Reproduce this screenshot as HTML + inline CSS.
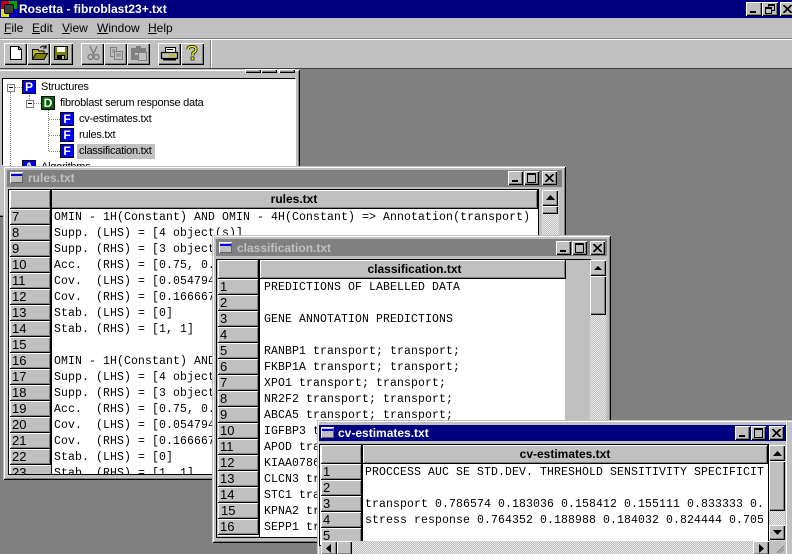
<!DOCTYPE html>
<html><head><meta charset="utf-8"><style>
html,body{margin:0;padding:0}
#r{position:relative;width:792px;height:554px;overflow:hidden;background:#808080;font-family:"Liberation Sans",sans-serif;font-size:12px;color:#000}
#r div,#r span,#r svg{position:absolute;white-space:pre}
.b{background:#c0c0c0;box-shadow:inset 1px 1px 0 #fff,inset -1px -1px 0 #000,inset -2px -2px 0 #808080}
.w{background:#c0c0c0;box-shadow:inset 1px 1px 0 #c0c0c0,inset -1px -1px 0 #000,inset 2px 2px 0 #fff,inset -2px -2px 0 #808080}
.t{font-weight:bold;font-size:12px;color:#c0c0c0;line-height:16px;height:16px}
.m{font-family:"Liberation Mono",monospace;font-size:11.5px;letter-spacing:.1px;line-height:16px;height:16px;overflow:hidden}
.n{font-size:13px;line-height:15px;height:15px;overflow:hidden}
.h{font-weight:bold;font-size:12px;line-height:18px;text-align:center}
.c{background:#c0c0c0;box-shadow:inset 1px 1px 0 #fff,inset -1px -1px 0 #808080;border-bottom:1px solid #000;border-right:1px solid #000;box-sizing:border-box}
.chk{background-color:#e8e8e8;background-image:linear-gradient(45deg,#c0c0c0 25%,transparent 25%,transparent 75%,#c0c0c0 75%),linear-gradient(45deg,#c0c0c0 25%,transparent 25%,transparent 75%,#c0c0c0 75%);background-size:2px 2px;background-position:0 0,1px 1px}
.ic{width:12px;height:12px;background:#00f;color:#fff;font-weight:bold;font-size:12px;line-height:12px;text-align:center;box-shadow:0 0 0 1px #000}
.tree{font-size:11px;letter-spacing:-.25px;line-height:15px}
.dv{border-left:1px dotted #808080}.dh{border-top:1px dotted #808080}
.wi{width:13px;height:11px;background:#c0c0c0;box-shadow:inset 1px 1px 0 #fff,inset -1px -1px 0 #606060}
.wi:after{content:"";position:absolute;left:1px;top:2px;width:11px;height:2px;background:#0000e0}
</style></head><body><div id="r">

<!-- main title -->
<div style="left:0;top:0;width:792px;height:18px;background:#000080"></div>
<div style="left:1px;top:1px;width:16px;height:16px;background:#c00000"></div>
<div style="left:1px;top:9px;width:8px;height:8px;background:#e0e000"></div>
<div style="left:9px;top:1px;width:8px;height:8px;background:#00a000"></div>
<div style="left:9px;top:9px;width:8px;height:8px;background:#0000d0"></div>
<div style="left:4px;top:4px;width:8px;height:8px;background:#404040;border:1px solid #000;border-radius:2px"></div>
<div style="left:19px;top:0;color:#fff;font-weight:bold;font-size:12px;line-height:18px">Rosetta - fibroblast23+.txt</div>
<div class="b" style="left:746px;top:2px;width:16px;height:14px"></div>
<div style="left:750px;top:11px;width:6px;height:2px;background:#000"></div>
<div class="b" style="left:762px;top:2px;width:16px;height:14px"></div>
<div style="left:768px;top:4px;width:5px;height:4px;border:1px solid #000;border-top-width:2px"></div>
<div style="left:765px;top:7px;width:5px;height:4px;border:1px solid #000;border-top-width:2px;background:#c0c0c0"></div>
<div class="b" style="left:780px;top:2px;width:16px;height:14px"></div>
<svg style="left:783px;top:5px" width="9" height="8"><path d="M0 0L8 8M1 0L9 8M8 0L0 8M9 0L1 8" stroke="#000"/></svg>

<!-- menu + toolbar -->
<div style="left:0;top:18px;width:792px;height:51px;background:#c0c0c0"></div>
<div style="left:4px;top:20px;font-size:12px;line-height:16px"><u>F</u>ile</div>
<div style="left:32px;top:20px;font-size:12px;line-height:16px"><u>E</u>dit</div>
<div style="left:62px;top:20px;font-size:12px;line-height:16px"><u>V</u>iew</div>
<div style="left:97px;top:20px;font-size:12px;line-height:16px"><u>W</u>indow</div>
<div style="left:148px;top:20px;font-size:12px;line-height:16px"><u>H</u>elp</div>
<div style="left:0;top:38px;width:792px;height:1px;background:#808080"></div>
<div style="left:0;top:39px;width:792px;height:1px;background:#fff"></div>
<div style="left:210px;top:40px;width:1px;height:28px;background:#808080"></div>
<div style="left:211px;top:40px;width:1px;height:28px;background:#fff"></div>
<div style="left:0;top:68px;width:792px;height:1px;background:#404040"></div>

<div class="b" style="left:4px;top:43px;width:23px;height:22px"></div>
<div class="b" style="left:27px;top:43px;width:23px;height:22px"></div>
<div class="b" style="left:50px;top:43px;width:23px;height:22px"></div>
<div class="b" style="left:81px;top:43px;width:23px;height:22px"></div>
<div class="b" style="left:104px;top:43px;width:23px;height:22px"></div>
<div class="b" style="left:127px;top:43px;width:23px;height:22px"></div>
<div class="b" style="left:158px;top:43px;width:23px;height:22px"></div>
<div class="b" style="left:181px;top:43px;width:23px;height:22px"></div>
<svg style="left:0;top:38px" width="210" height="30">
<path d="M10.500 8.500H18.500L21.500 11.500V21.500H10.500Z" fill="#fff" stroke="#000"/><path d="M18.500 8.500V11.500H21.500" fill="none" stroke="#000"/>
<path d="M32.500 11.500H38L39 13H44V21.500H32.500Z" fill="#c0c000" stroke="#000"/><path d="M32.500 21.500L36 15.500H47.500L44 21.500Z" fill="#808000" stroke="#000"/><path d="M40 9.500Q44 6.500 46 9.500M46 7V10H43" fill="none" stroke="#000"/>
<path d="M54.500 8.500H67.500V21.500H54.500Z" fill="#808000" stroke="#000"/><rect x="57" y="9" width="8" height="5" fill="#fff"/><rect x="57" y="17" width="8" height="4" fill="#000"/><rect x="62" y="18" width="2" height="3" fill="#c0c0c0"/>
<path d="M90 8L94 17M97 8L93 17" stroke="#808080" stroke-width="1.500"/><circle cx="90.500" cy="19" r="2.500" fill="none" stroke="#808080" stroke-width="1.500"/><circle cx="96.500" cy="19" r="2.500" fill="none" stroke="#808080" stroke-width="1.500"/>
<path d="M110.500 9.500H116.500V18.500H110.500Z" fill="#c0c0c0" stroke="#808080"/><path d="M114.500 13.500H122.500V21.500H114.500Z" fill="#c0c0c0" stroke="#808080"/><path d="M112 12H115M112 14H114M116 16H121M116 18H121" stroke="#808080"/>
<path d="M131.500 10.500H145.500V21.500H131.500Z" fill="#808080" stroke="#808080"/><rect x="136" y="8" width="5" height="3" fill="#808080"/><path d="M138.500 14.500H146.500V22.500H138.500Z" fill="#c0c0c0" stroke="#808080"/><path d="M135 16H138" stroke="#fff"/>
<path d="M165.500 9.500H175.500V14.500H165.500Z" fill="#fff" stroke="#000"/><path d="M161.500 14.500H177.500V20.500H161.500Z" fill="#c0c0c0" stroke="#000" stroke-width="1.300"/><path d="M163 21.500H176" stroke="#000" stroke-width="2"/><path d="M169 17.500H175" stroke="#c0c000" stroke-width="2"/><path d="M167 11.500H173" stroke="#000"/>
<path d="M188 11.500Q188 8.500 192 8.500Q196 8.500 196 11.500Q196 13.500 193 15V17.500" fill="none" stroke="#000" stroke-width="3"/><path d="M188 11.500Q188 8.500 192 8.500Q196 8.500 196 11.500Q196 13.500 193 15V17.500" fill="none" stroke="#ffff00" stroke-width="1.500"/><rect x="191" y="19" width="3" height="3" fill="#ffff00" stroke="#000" stroke-width=".7"/>
</svg>

<!-- tree window -->
<div class="w" style="left:-4px;top:69px;width:304px;height:148px"></div>
<div class="b" style="left:245px;top:69px;width:16px;height:4px"></div>
<div class="b" style="left:261px;top:69px;width:16px;height:4px"></div>
<div class="b" style="left:279px;top:69px;width:16px;height:4px"></div>
<div style="left:3px;top:79px;width:293px;height:87px;background:#fff;box-shadow:-1px -1px 0 #000"></div>
<div class="dv" style="left:10px;top:92px;height:74px"></div>
<div class="dv" style="left:29px;top:95px;height:4px"></div>
<div class="dv" style="left:48px;top:110px;height:41px"></div>
<div class="dh" style="left:14px;top:87px;width:8px"></div>
<div class="dh" style="left:33px;top:103px;width:8px"></div>
<div class="dh" style="left:49px;top:119px;width:11px"></div>
<div class="dh" style="left:49px;top:135px;width:11px"></div>
<div class="dh" style="left:49px;top:151px;width:11px"></div>
<div style="left:7px;top:84px;width:6px;height:6px;border:1px solid #808080;background:#fff"></div><div style="left:9px;top:87px;width:4px;height:1px;background:#000"></div>
<div style="left:26px;top:100px;width:6px;height:6px;border:1px solid #808080;background:#fff"></div><div style="left:28px;top:103px;width:4px;height:1px;background:#000"></div>
<div class="ic" style="left:23px;top:81px">P</div>
<div class="ic" style="left:42px;top:97px;background:#006400">D</div>
<div class="ic" style="left:61px;top:113px">F</div>
<div class="ic" style="left:61px;top:129px">F</div>
<div class="ic" style="left:61px;top:145px">F</div>
<div class="tree" style="left:41px;top:80px">Structures</div>
<div class="tree" style="left:60px;top:96px">fibroblast serum response data</div>
<div class="tree" style="left:79px;top:112px">cv-estimates.txt</div>
<div class="tree" style="left:79px;top:128px">rules.txt</div>
<div style="left:77px;top:144px;width:78px;height:15px;background:#c0c0c0"></div>
<div class="tree" style="left:79px;top:144px">classification.txt</div>
<div class="ic" style="left:23px;top:161px">A</div>
<div class="tree" style="left:41px;top:160px">Algorithms</div>

<!-- rules window -->
<div class="w" style="left:3px;top:166px;width:563px;height:314px;overflow:hidden">
 <div style="left:4px;top:4px;width:555px;height:17px;background:#808080"></div>
 <div style="left:6px;top:24px;width:529px;height:284px;background:#fff;box-shadow:0 0 0 1px #000"></div>
 <div style="left:7px;top:24px;width:41px;height:19px" class="c"></div>
 <div class="c h" style="left:48px;top:24px;width:487px;height:19px">rules.txt</div>
 <div style="left:48px;top:24px;width:1px;height:284px;background:#000"></div>
 <div class="c n" style="left:7px;top:43px;width:41px;height:16px;padding-left:2px">7</div>
 <div class="c n" style="left:7px;top:59px;width:41px;height:16px;padding-left:2px">8</div>
 <div class="c n" style="left:7px;top:75px;width:41px;height:16px;padding-left:2px">9</div>
 <div class="c n" style="left:7px;top:91px;width:41px;height:16px;padding-left:2px">10</div>
 <div class="c n" style="left:7px;top:107px;width:41px;height:16px;padding-left:2px">11</div>
 <div class="c n" style="left:7px;top:123px;width:41px;height:16px;padding-left:2px">12</div>
 <div class="c n" style="left:7px;top:139px;width:41px;height:16px;padding-left:2px">13</div>
 <div class="c n" style="left:7px;top:155px;width:41px;height:16px;padding-left:2px">14</div>
 <div class="c n" style="left:7px;top:171px;width:41px;height:16px;padding-left:2px">15</div>
 <div class="c n" style="left:7px;top:187px;width:41px;height:16px;padding-left:2px">16</div>
 <div class="c n" style="left:7px;top:203px;width:41px;height:16px;padding-left:2px">17</div>
 <div class="c n" style="left:7px;top:219px;width:41px;height:16px;padding-left:2px">18</div>
 <div class="c n" style="left:7px;top:235px;width:41px;height:16px;padding-left:2px">19</div>
 <div class="c n" style="left:7px;top:251px;width:41px;height:16px;padding-left:2px">20</div>
 <div class="c n" style="left:7px;top:267px;width:41px;height:16px;padding-left:2px">21</div>
 <div class="c n" style="left:7px;top:283px;width:41px;height:16px;padding-left:2px">22</div>
 <div class="n" style="left:7px;top:299px;width:41px;height:9px;padding-left:2px;box-sizing:border-box;background:#c0c0c0;box-shadow:inset 1px 1px 0 #fff">23</div>
 <div class="m" style="left:51px;top:44px">OMIN - 1H(Constant) AND OMIN - 4H(Constant) =&gt; Annotation(transport)</div>
 <div class="m" style="left:51px;top:60px">Supp. (LHS) = [4 object(s)]</div>
 <div class="m" style="left:51px;top:76px">Supp. (RHS) = [3 object(s)]</div>
 <div class="m" style="left:51px;top:92px">Acc.  (RHS) = [0.75, 0.25]</div>
 <div class="m" style="left:51px;top:108px">Cov.  (LHS) = [0.054794]</div>
 <div class="m" style="left:51px;top:124px">Cov.  (RHS) = [0.166667]</div>
 <div class="m" style="left:51px;top:140px">Stab. (LHS) = [0]</div>
 <div class="m" style="left:51px;top:156px">Stab. (RHS) = [1, 1]</div>
 <div class="m" style="left:51px;top:188px">OMIN - 1H(Constant) AND OMIN</div>
 <div class="m" style="left:51px;top:204px">Supp. (LHS) = [4 object(s)]</div>
 <div class="m" style="left:51px;top:220px">Supp. (RHS) = [3 object(s)]</div>
 <div class="m" style="left:51px;top:236px">Acc.  (RHS) = [0.75, 0.25]</div>
 <div class="m" style="left:51px;top:252px">Cov.  (LHS) = [0.054794]</div>
 <div class="m" style="left:51px;top:268px">Cov.  (RHS) = [0.166667]</div>
 <div class="m" style="left:51px;top:284px">Stab. (LHS) = [0]</div>
 <div class="m" style="left:51px;top:300px;height:8px">Stab. (RHS) = [1, 1]</div>
</div>
<div class="b" style="left:508px;top:171px;width:15px;height:14px"></div><div style="left:512px;top:180px;width:6px;height:2px;background:#000"></div>
<div class="b" style="left:524px;top:171px;width:15px;height:14px"></div><div style="left:527px;top:173px;width:7px;height:7px;border:1px solid #000;border-top-width:2px"></div>
<div class="b" style="left:542px;top:171px;width:15px;height:14px"></div>
<svg style="left:545px;top:174px" width="9" height="8"><path d="M0 0L8 8M1 0L9 8M8 0L0 8M9 0L1 8" stroke="#000"/></svg>
<div class="chk" style="left:542px;top:190px;width:17px;height:60px"></div>
<div class="b" style="left:542px;top:190px;width:16px;height:16px"></div>
<svg style="left:546px;top:195px" width="9" height="5"><path d="M4.500 0L9 5H0Z"/></svg>
<div class="b" style="left:542px;top:206px;width:16px;height:8px"></div>

<!-- classification window -->
<div class="w" style="left:212px;top:235px;width:399px;height:308px;overflow:hidden">
 <div style="left:4px;top:4px;width:391px;height:17px;background:#808080"></div>
 <div style="left:5px;top:25px;width:373px;height:277px;background:#c0c0c0;box-shadow:0 0 0 1px #000"></div>
 <div style="left:48px;top:44px;width:305px;height:258px;background:#fff"></div>
 <div class="c" style="left:6px;top:25px;width:41px;height:19px"></div>
 <div class="c h" style="left:48px;top:25px;width:306px;height:19px;padding-left:4px">classification.txt</div>
 <div style="left:47px;top:25px;width:1px;height:277px;background:#000"></div>
 <div class="c n" style="left:6px;top:44px;width:41px;height:16px;padding-left:2px">1</div>
 <div class="c n" style="left:6px;top:60px;width:41px;height:16px;padding-left:2px">2</div>
 <div class="c n" style="left:6px;top:76px;width:41px;height:16px;padding-left:2px">3</div>
 <div class="c n" style="left:6px;top:92px;width:41px;height:16px;padding-left:2px">4</div>
 <div class="c n" style="left:6px;top:108px;width:41px;height:16px;padding-left:2px">5</div>
 <div class="c n" style="left:6px;top:124px;width:41px;height:16px;padding-left:2px">6</div>
 <div class="c n" style="left:6px;top:140px;width:41px;height:16px;padding-left:2px">7</div>
 <div class="c n" style="left:6px;top:156px;width:41px;height:16px;padding-left:2px">8</div>
 <div class="c n" style="left:6px;top:172px;width:41px;height:16px;padding-left:2px">9</div>
 <div class="c n" style="left:6px;top:188px;width:41px;height:16px;padding-left:2px">10</div>
 <div class="c n" style="left:6px;top:204px;width:41px;height:16px;padding-left:2px">11</div>
 <div class="c n" style="left:6px;top:220px;width:41px;height:16px;padding-left:2px">12</div>
 <div class="c n" style="left:6px;top:236px;width:41px;height:16px;padding-left:2px">13</div>
 <div class="c n" style="left:6px;top:252px;width:41px;height:16px;padding-left:2px">14</div>
 <div class="c n" style="left:6px;top:268px;width:41px;height:16px;padding-left:3px">15</div>
 <div class="c n" style="left:6px;top:284px;width:41px;height:16px;padding-left:2px">16</div>
 <div style="left:6px;top:300px;width:41px;height:2px;background:#c0c0c0;border-top:1px solid #fff;box-sizing:border-box"></div>
 <div class="m" style="left:52px;top:45px">PREDICTIONS OF LABELLED DATA</div>
 <div class="m" style="left:52px;top:77px">GENE ANNOTATION PREDICTIONS</div>
 <div class="m" style="left:52px;top:109px">RANBP1 transport; transport;</div>
 <div class="m" style="left:52px;top:125px">FKBP1A transport; transport;</div>
 <div class="m" style="left:52px;top:141px">XPO1 transport; transport;</div>
 <div class="m" style="left:52px;top:157px">NR2F2 transport; transport;</div>
 <div class="m" style="left:52px;top:173px">ABCA5 transport; transport;</div>
 <div class="m" style="left:52px;top:189px">IGFBP3 transport; transport;</div>
 <div class="m" style="left:52px;top:205px">APOD transport; transport;</div>
 <div class="m" style="left:52px;top:221px">KIAA0786 transport; transport;</div>
 <div class="m" style="left:52px;top:237px">CLCN3 transport; transport;</div>
 <div class="m" style="left:52px;top:253px">STC1 transport; transport;</div>
 <div class="m" style="left:52px;top:269px">KPNA2 transport; transport;</div>
 <div class="m" style="left:52px;top:285px">SEPP1 transport; transport;</div>
</div>
<div class="b" style="left:556px;top:241px;width:15px;height:14px"></div><div style="left:560px;top:250px;width:6px;height:2px;background:#000"></div>
<div class="b" style="left:572px;top:241px;width:15px;height:14px"></div><div style="left:575px;top:243px;width:7px;height:7px;border:1px solid #000;border-top-width:2px"></div>
<div class="b" style="left:590px;top:241px;width:15px;height:14px"></div>
<svg style="left:593px;top:244px" width="9" height="8"><path d="M0 0L8 8M1 0L9 8M8 0L0 8M9 0L1 8" stroke="#000"/></svg>
<div class="chk" style="left:590px;top:260px;width:16px;height:277px"></div>
<div class="b" style="left:590px;top:260px;width:16px;height:16px"></div>
<svg style="left:594px;top:266px" width="8" height="4"><path d="M4 0L8 4H0Z"/></svg>
<div class="b" style="left:590px;top:276px;width:16px;height:39px"></div>

<!-- cv window -->
<div class="w" style="left:317px;top:420px;width:480px;height:141px;overflow:hidden">
 <div style="left:2px;top:5px;width:468px;height:16px;background:#000080"></div>
 <div style="left:3px;top:25px;width:448px;height:100px;background:#fff;box-shadow:0 0 0 1px #000"></div>
 <div class="c" style="left:4px;top:25px;width:41px;height:19px"></div>
 <div class="c h" style="left:46px;top:25px;width:405px;height:19px">cv-estimates.txt</div>
 <div style="left:45px;top:25px;width:1px;height:100px;background:#000"></div>
 <div class="c n" style="left:4px;top:44px;width:41px;height:16px;padding-left:2px">1</div>
 <div class="c n" style="left:4px;top:60px;width:41px;height:16px;padding-left:2px">2</div>
 <div class="c n" style="left:4px;top:76px;width:41px;height:16px;padding-left:2px">3</div>
 <div class="c n" style="left:4px;top:92px;width:41px;height:16px;padding-left:2px">4</div>
 <div class="c n" style="left:4px;top:108px;width:41px;height:16px;padding-left:2px">5</div>
 <div class="m" style="left:48px;top:45px;width:403px">PROCCESS AUC SE STD.DEV. THRESHOLD SENSITIVITY SPECIFICIT</div>
 <div class="m" style="left:48px;top:77px;width:403px">transport 0.786574 0.183036 0.158412 0.155111 0.833333 0.</div>
 <div class="m" style="left:48px;top:93px;width:403px">stress response 0.764352 0.188988 0.184032 0.824444 0.705</div>
</div>
<div style="left:338px;top:425px;color:#fff;font-weight:bold;font-size:12px;line-height:16px">cv-estimates.txt</div>
<div class="wi" style="left:321px;top:427px"></div>
<div class="b" style="left:735px;top:426px;width:15px;height:14px"></div><div style="left:739px;top:435px;width:6px;height:2px;background:#000"></div>
<div class="b" style="left:751px;top:426px;width:15px;height:14px"></div><div style="left:754px;top:428px;width:7px;height:7px;border:1px solid #000;border-top-width:2px"></div>
<div class="b" style="left:769px;top:426px;width:15px;height:14px"></div>
<svg style="left:772px;top:429px" width="9" height="8"><path d="M0 0L8 8M1 0L9 8M8 0L0 8M9 0L1 8" stroke="#000"/></svg>
<div class="chk" style="left:769px;top:445px;width:16px;height:96px"></div>
<div class="b" style="left:769px;top:445px;width:16px;height:16px"></div>
<svg style="left:773px;top:451px" width="9" height="5"><path d="M4.500 0L9 5H0Z"/></svg>
<div class="b" style="left:769px;top:461px;width:16px;height:50px"></div>
<div class="b" style="left:769px;top:525px;width:16px;height:15px"></div>
<svg style="left:773px;top:530px" width="9" height="5"><path d="M0 0H9L4.500 5Z"/></svg>
<div class="chk" style="left:321px;top:541px;width:448px;height:13px"></div>
<div class="b" style="left:321px;top:541px;width:16px;height:14px"></div>
<svg style="left:326px;top:544px" width="5" height="9"><path d="M5 0V9L0 4.500Z"/></svg>
<div class="b" style="left:337px;top:541px;width:15px;height:14px"></div>
<div class="b" style="left:753px;top:541px;width:16px;height:14px"></div>
<svg style="left:759px;top:544px" width="5" height="9"><path d="M0 0V9L5 4.500Z"/></svg>
<div style="left:769px;top:541px;width:16px;height:13px;background:#c0c0c0"></div>
<svg style="left:776px;top:544px" width="9" height="10"><path d="M8 2L1 9M8 5L4 9" stroke="#808080"/></svg>
<div style="left:786px;top:420px;width:1px;height:134px;background:#fff"></div>

<!-- inactive titles -->
<div class="t" style="left:28px;top:170px">rules.txt</div>
<div class="wi" style="left:10px;top:172px"></div>
<div class="t" style="left:237px;top:240px">classification.txt</div>
<div class="wi" style="left:219px;top:242px"></div>
</div></body></html>
